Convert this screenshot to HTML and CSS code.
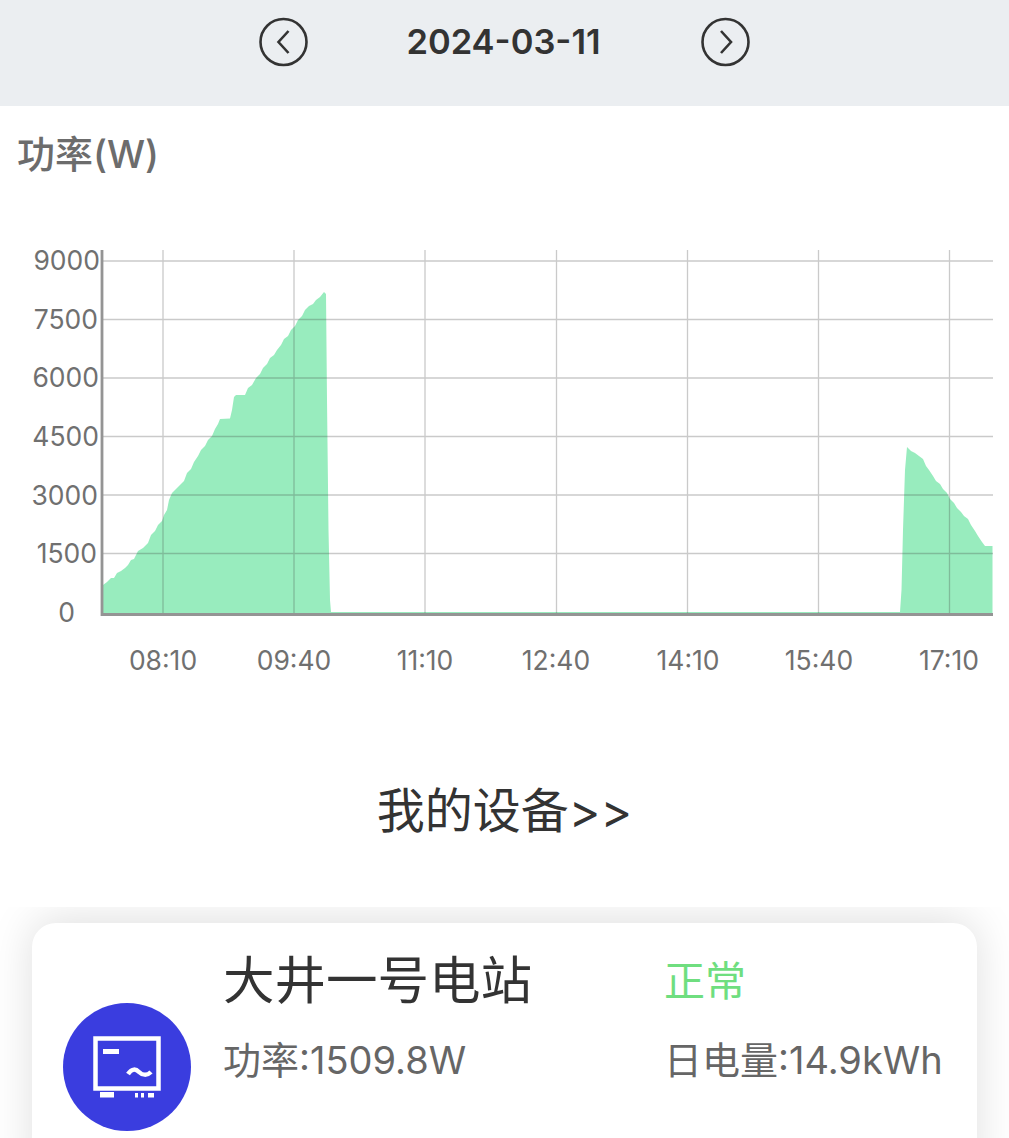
FILE: index.html
```html
<!DOCTYPE html>
<html lang="zh-CN">
<head>
<meta charset="utf-8">
<title>电站功率</title>
<link rel="stylesheet" href="styles.css">
</head>
<body>
<header class="date-bar">
  <button class="nav-btn" type="button" aria-label="前一天">
    <svg class="nav-icon" viewBox="0 0 50 50"><circle cx="24.500" cy="25" r="23"/><path d="M29.500 14 L19.500 25 L29.500 36"/></svg>
  </button>
  <div class="date-label">2024-03-11</div>
  <button class="nav-btn" type="button" aria-label="后一天">
    <svg class="nav-icon" viewBox="0 0 50 50"><circle cx="24.500" cy="25" r="23"/><path d="M20 14 L30 25 L20 36"/></svg>
  </button>
</header>

<section class="power">
  <h2 class="power-title">功率(W)</h2>
  <svg class="chart" viewBox="0 0 1009 520" role="img" aria-label="功率曲线">
    <g transform="translate(0,-210)">
      <!-- power series, morning and late afternoon output -->
      <path class="area" d="M103 613 L103 585 L107 582 L111 578 L114 578 L117 573 L121 571 L125 568 L128 565 L131 560 L134 559 L138 551 L143 548 L148 543 L151 535 L155 531 L158 525 L162 521 L164 515 L167 510 L169 500 L172 493 L176 489 L180 485 L184 481 L187 473 L191 469 L194 462 L198 456 L201 450 L205 446 L208 440 L212 436 L215 429 L218 424 L220 419 L230 418.500 L232 410 L234 397 L236 395 L245 395 L248 388 L252 385 L256 378 L260 374 L263 368 L267 364 L270 358 L274 355 L277 350 L281 345 L284 339 L288 336 L291 330 L295 326 L298 320 L302 316 L305 310 L309 306 L313 304 L316 300 L320 297 L324 292 L326 294 L327 400 L328.500 530 L330 600 L331 612 L900 612 L901.500 590 L903 530 L905 470 L907 447 L911 451 L915 453 L919 456 L923 459 L926 466 L929 470 L933 476 L936 481 L940 484 L943 489 L947 493 L950 499 L954 503 L957 508 L961 512 L964 516 L968 519 L971 525 L975 531 L978 536 L982 542 L985 546 L992.500 546 L992.500 613 Z"/>
      <path class="grid" d="M103 261H993M103 319.500H993M103 378H993M103 436.500H993M103 495H993M103 553.500H993M163 250V614M294 250V614M425 250V614M556.500 250V614M687.500 250V614M818.500 250V614M949.500 250V614"/>
      <path class="axis" d="M102 250V616M101 614.500H993"/>
      <g class="y-labels">
        <text x="100" y="270">9000</text>
        <text x="98" y="328.500">7500</text>
        <text x="99" y="387">6000</text>
        <text x="99" y="446">4500</text>
        <text x="98" y="504.500">3000</text>
        <text x="97" y="563">1500</text>
        <text x="75" y="622">0</text>
      </g>
      <g class="x-labels">
        <text x="163" y="670">08:10</text>
        <text x="294" y="670">09:40</text>
        <text x="425" y="670">11:10</text>
        <text x="556" y="670">12:40</text>
        <text x="688" y="670">14:10</text>
        <text x="819" y="670">15:40</text>
        <text x="949" y="670">17:10</text>
      </g>
    </g>
  </svg>
</section>

<h2 class="devices-link">我的设备&gt;&gt;</h2>

<section class="devices">
  <article class="device-card">
    <div class="device-icon">
      <svg viewBox="0 0 128 128">
        <rect class="inv-line" x="32.500" y="35.500" width="63" height="50"/>
        <rect class="inv-fill" x="40" y="46" width="16" height="5"/>
        <path class="inv-line" d="M65 71 C69 65 73 66 76 69 C79 72 84 73 88 69"/>
        <rect class="inv-fill" x="37" y="89" width="14" height="5.500"/>
        <rect class="inv-fill" x="72" y="90" width="3" height="4.500"/>
        <rect class="inv-fill" x="78" y="90" width="3" height="4.500"/>
        <rect class="inv-fill" x="85" y="90" width="6" height="4.500"/>
      </svg>
    </div>
    <div class="device-info">
      <div class="device-row device-row-head">
        <span class="device-name">大井一号电站</span>
        <span class="device-status">正常</span>
      </div>
      <div class="device-row">
        <span class="device-stat">功率:1509.8W</span>
        <span class="device-stat">日电量:14.9kWh</span>
      </div>
    </div>
  </article>
</section>
</body>
</html>
```
FILE: styles.css
```css
* { box-sizing: border-box; }

html, body {
  margin: 0;
  padding: 0;
  height: 1138px;
  overflow: hidden;
  background: #fff;
}

body {
  font-family: "Inter", "Noto Sans CJK SC", sans-serif;
  color: #333;
}

.date-bar {
  height: 106px;
  background: #ebeef1;
  display: flex;
  justify-content: center;
  align-items: flex-start;
  padding-top: 17px;
}

.nav-btn {
  width: 50px;
  height: 50px;
  padding: 0;
  border: 0;
  background: none;
}

.nav-icon {
  display: block;
  width: 50px;
  height: 50px;
  fill: none;
  stroke: #333;
  stroke-width: 2.600;
}

.date-label {
  width: 392px;
  height: 50px;
  padding-right: 2px;
  line-height: 50px;
  text-align: center;
  font-size: 34.500px;
  font-weight: 600;
  color: #333;
}

.power {
  height: 630px;
}

.power-title {
  margin: 0;
  padding: 23px 0 0 17px;
  height: 104px;
  font-size: 38px;
  line-height: 50px;
  font-weight: 500;
  color: #6c6c6c;
  font-family: "Inter", "Noto Sans CJK SC", sans-serif;
}

.chart {
  display: block;
  width: 1009px;
  height: 520px;
}

.area { fill: #98ecbe; }
.grid { fill: none; stroke: rgba(60, 60, 60, 0.27); stroke-width: 1.300; }
.axis { fill: none; stroke: #949494; stroke-width: 2.800; }

.y-labels text,
.x-labels text {
  font-family: "Inter", sans-serif;
  font-size: 26.500px;
  fill: #707070;
}

.y-labels text { text-anchor: end; }
.x-labels text { text-anchor: middle; }

.devices-link {
  margin: 0;
  height: 171px;
  padding-top: 43px;
  text-align: center;
  font-size: 48px;
  line-height: 64px;
  font-weight: 400;
  color: #333;
  font-family: "Inter", "Noto Sans CJK SC", sans-serif;
}

.devices {
  height: 231px;
  padding: 16px 32px 0;
  overflow: hidden;
}

.device-card {
  display: flex;
  background: #fff;
  border-radius: 24px 24px 0 0;
  height: 260px;
  padding: 0 31px;
  box-shadow: 0 -4px 44px rgba(0, 0, 0, 0.13);
}

.device-icon {
  flex: none;
  width: 128px;
  height: 128px;
  margin-top: 80px;
  border-radius: 50%;
  background: #3a3ddf;
}

.device-icon svg {
  display: block;
  width: 128px;
  height: 128px;
}

.inv-line { fill: none; stroke: #fff; stroke-width: 4.500; }
.inv-fill { fill: #fff; }

.device-info {
  flex: 1;
  padding-left: 32px;
}

.device-row {
  display: grid;
  grid-template-columns: 441px auto;
}

.device-row-head {
  height: 111px;
  align-items: center;
  padding-bottom: 3px;
}

.device-name {
  font-size: 51.500px;
  line-height: 70px;
  color: #333;
  font-family: "Noto Sans CJK SC", sans-serif;
}

.device-status {
  padding-top: 2px;
  font-size: 41px;
  line-height: 56px;
  color: #6fde7f;
  font-family: "Noto Sans CJK SC", sans-serif;
}

.device-stat {
  font-size: 38px;
  line-height: 52px;
  color: #666;
  white-space: nowrap;
}
```
